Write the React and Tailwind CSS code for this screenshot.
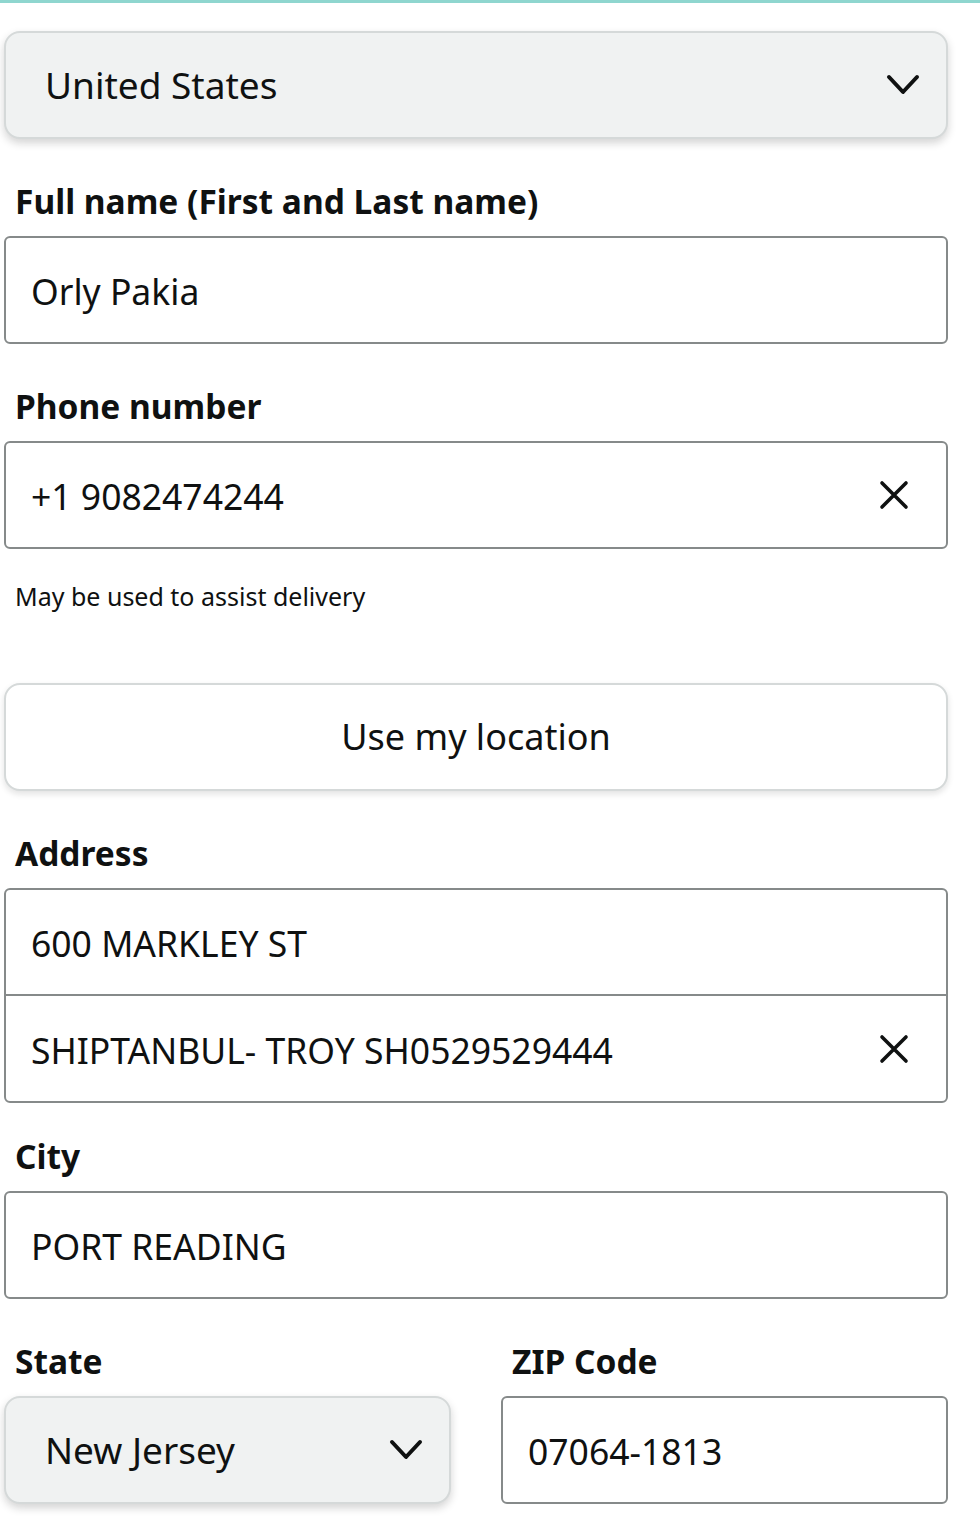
import React from 'react';

const font = { fontFamily: '"Noto Sans", "Open Sans", sans-serif' };

const Chevron = () => (
  <svg width="34" height="22" viewBox="0 0 34 22" fill="none" stroke="#0f1111" strokeWidth="4" strokeLinecap="round" strokeLinejoin="round">
    <path d="M3 3 L17 18 L31 3" />
  </svg>
);

const Clear = () => (
  <svg width="30" height="30" viewBox="0 0 30 30" fill="none" stroke="#0f1111" strokeWidth="3.6" strokeLinecap="round">
    <path d="M3 3 L27 27 M27 3 L3 27" />
  </svg>
);

const Label = ({ children, className = '' }) => (
  <div className={`pl-[11px] text-[33.5px] leading-[40px] font-bold text-[#0f1111] ${className}`}>{children}</div>
);

const Field = ({ value, clear }) => (
  <div className="mt-[15px] h-[108px] rounded-[6px] border-2 border-[#868a8a] bg-white flex items-center justify-between pl-[25px] pr-[37px]">
    <span className="text-[35.5px] text-[#0f1111] pt-[4px]">{value}</span>
    {clear && <Clear />}
  </div>
);

const Select = ({ value, className = '' }) => (
  <div className={`h-[108px] rounded-[16px] border-2 border-[#d5d9d9] bg-[#f0f2f2] shadow-[0_4px_8px_rgba(15,17,17,0.18)] flex items-center justify-between pl-[39px] pr-[26px] ${className}`}>
    <span className="text-[37px] text-[#0f1111]">{value}</span>
    <Chevron />
  </div>
);

export default function App() {
  return (
    <div className="w-[980px] min-h-[1527px] bg-white" style={font}>
      <div className="h-[3px] bg-[#8fd6cf]" />
      <div className="ml-[4px] w-[944px] pt-[28px]">
        <Select value="United States" />

        <Label className="mt-[42px]">Full name (First and Last name)</Label>
        <Field value="Orly Pakia" />

        <Label className="mt-[42px]">Phone number</Label>
        <Field value="+1 9082474244" clear />

        <div className="mt-[31px] pl-[11px] text-[25px] leading-[32px] text-[#0f1111]">May be used to assist delivery</div>

        <div className="mt-[71px] h-[108px] rounded-[16px] border-2 border-[#d5d9d9] bg-white shadow-[0_3px_6px_rgba(15,17,17,0.12)] flex items-center justify-center">
          <span className="text-[36px] text-[#0f1111]">Use my location</span>
        </div>

        <Label className="mt-[42px]">Address</Label>
        <div className="mt-[15px] rounded-[6px] border-2 border-[#868a8a] bg-white">
          <div className="h-[106px] border-b-2 border-[#868a8a] flex items-center pl-[25px]">
            <span className="text-[35.5px] text-[#0f1111] pt-[4px]">600 MARKLEY ST</span>
          </div>
          <div className="h-[105px] flex items-center justify-between pl-[25px] pr-[37px]">
            <span className="text-[35.5px] text-[#0f1111] pt-[4px]">SHIPTANBUL- TROY SH0529529444</span>
            <Clear />
          </div>
        </div>

        <Label className="mt-[33px]">City</Label>
        <Field value="PORT READING" />

        <div className="mt-[42px] grid grid-cols-2 gap-[50px]">
          <div>
            <Label>State</Label>
            <Select value="New Jersey" className="mt-[15px]" />
          </div>
          <div>
            <Label>ZIP Code</Label>
            <Field value="07064-1813" />
          </div>
        </div>
      </div>
    </div>
  );
}
